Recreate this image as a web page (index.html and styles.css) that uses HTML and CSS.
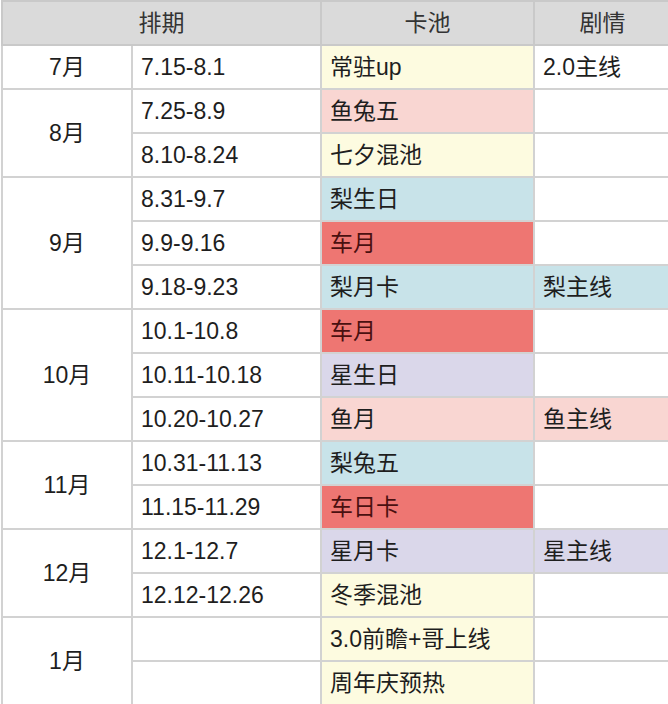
FILE: index.html
```html
<!DOCTYPE html>
<html lang="zh">
<head>
<meta charset="utf-8">
<title>排期</title>
<link rel="stylesheet" href="styles.css">
</head>
<body>
<table class="sched">
  <colgroup>
    <col class="c-month"><col class="c-date"><col class="c-pool"><col class="c-story">
  </colgroup>
  <thead>
    <tr><th colspan="2">排期</th><th>卡池</th><th>剧情</th></tr>
  </thead>
  <tbody>
    <tr><td class="month">7月</td><td>7.15-8.1</td><td class="yellow">常驻up</td><td>2.0主线</td></tr>
    <tr><td class="month" rowspan="2">8月</td><td>7.25-8.9</td><td class="pink">鱼兔五</td><td></td></tr>
    <tr><td>8.10-8.24</td><td class="yellow">七夕混池</td><td></td></tr>
    <tr><td class="month" rowspan="3">9月</td><td>8.31-9.7</td><td class="teal">梨生日</td><td></td></tr>
    <tr><td>9.9-9.16</td><td class="red">车月</td><td></td></tr>
    <tr><td>9.18-9.23</td><td class="teal">梨月卡</td><td class="teal">梨主线</td></tr>
    <tr><td class="month" rowspan="3">10月</td><td>10.1-10.8</td><td class="red">车月</td><td></td></tr>
    <tr><td>10.11-10.18</td><td class="lav">星生日</td><td></td></tr>
    <tr><td>10.20-10.27</td><td class="pink">鱼月</td><td class="pink">鱼主线</td></tr>
    <tr><td class="month" rowspan="2">11月</td><td>10.31-11.13</td><td class="teal">梨兔五</td><td></td></tr>
    <tr><td>11.15-11.29</td><td class="red">车日卡</td><td></td></tr>
    <tr><td class="month" rowspan="2">12月</td><td>12.1-12.7</td><td class="lav">星月卡</td><td class="lav">星主线</td></tr>
    <tr><td>12.12-12.26</td><td class="yellow">冬季混池</td><td></td></tr>
    <tr><td class="month" rowspan="2">1月</td><td></td><td class="yellow">3.0前瞻+哥上线</td><td></td></tr>
    <tr><td></td><td class="yellow">周年庆预热</td><td></td></tr>
  </tbody>
</table>
</body>
</html>
```

FILE: styles.css
```css
html, body {
  margin: 0;
  padding: 0;
  background: #ffffff;
}

.sched {
  border-collapse: collapse;
  table-layout: fixed;
  width: 669px;
  margin: 0 0 0 1px;
  font-family: "Liberation Sans", "Noto Sans CJK SC", sans-serif;
  font-size: 23px;
  color: #1e1e1e;
}

.c-month { width: 130px; }
.c-date { width: 189px; }
.c-pool { width: 213px; }
.c-story { width: 137px; }

.sched th,
.sched td {
  border: 2px solid #d2d2d2;
  height: 42px;
  padding: 0 0 0 8px;
  text-align: left;
  vertical-align: middle;
  white-space: nowrap;
  overflow: hidden;
  line-height: 26px;
}

.sched th {
  background: #dadada;
  color: #333333;
  font-weight: normal;
  text-align: center;
  padding: 0;
  border-color: #c9c9c9;
}

.sched td.month {
  text-align: center;
  padding: 0;
}

.yellow { background: #fdfbe0; }
.pink { background: #f9d6d2; }
.teal { background: #c8e3e9; }
.red { background: #ee7672; color: #4a1010; }
.lav { background: #dad7ea; }
```
